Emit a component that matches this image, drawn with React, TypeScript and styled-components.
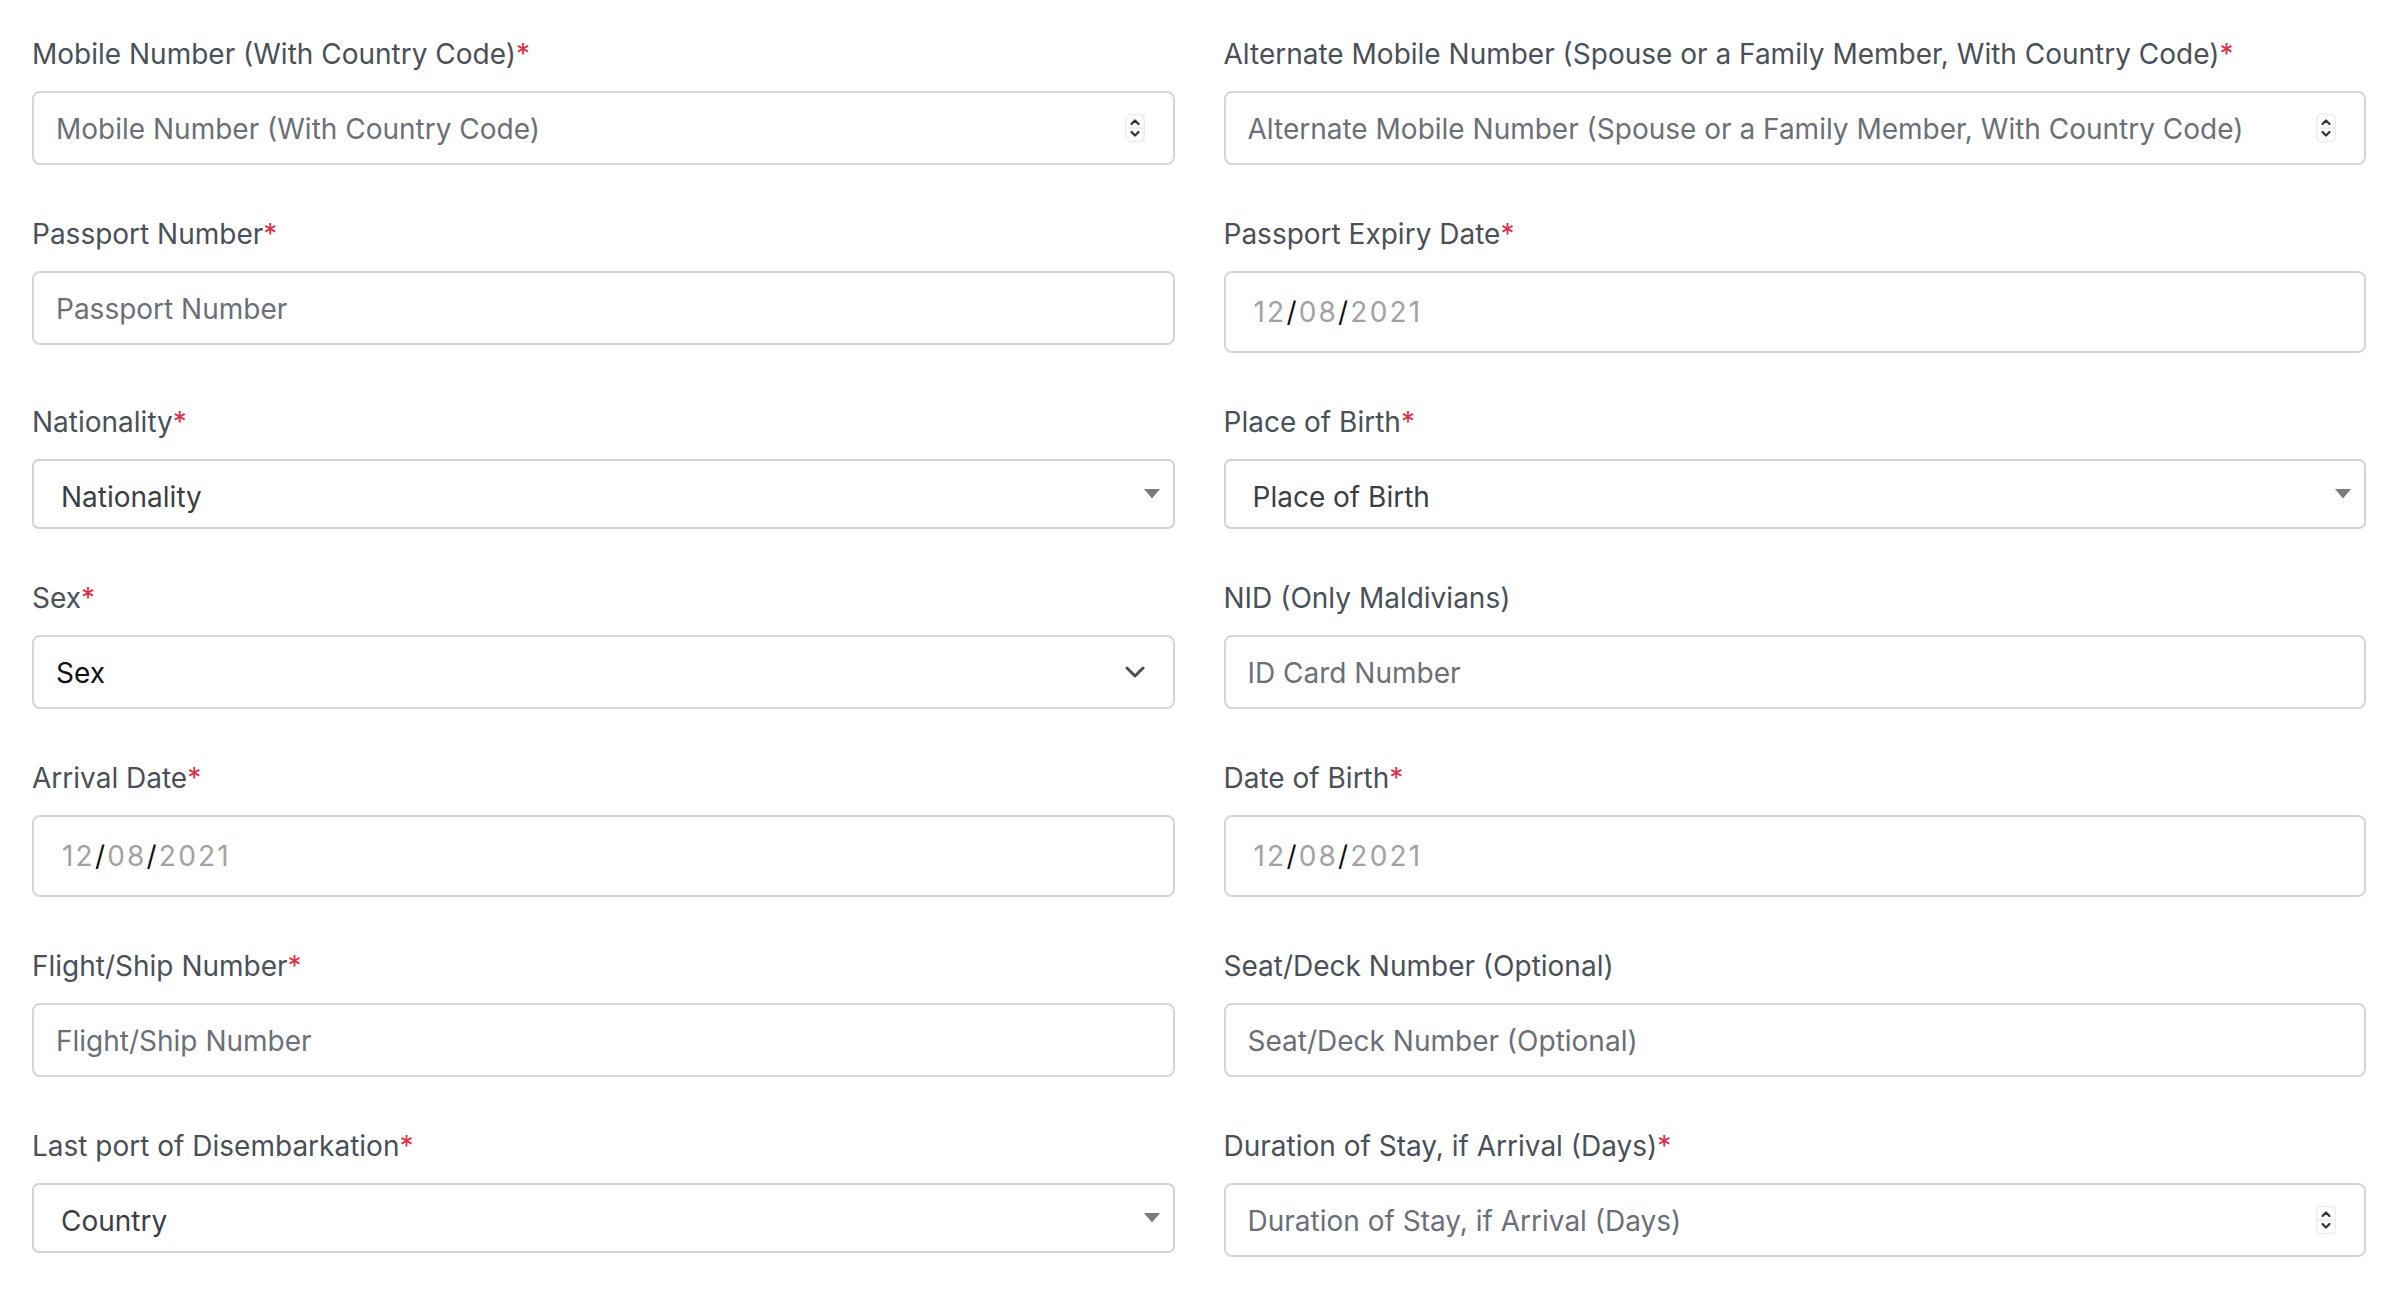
import React from "react";
import styled, { createGlobalStyle, css } from "styled-components";

const GlobalStyle = createGlobalStyle`
  html, body { margin: 0; padding: 0; background: #ffffff; }
  body { font-family: Inter, "Noto Sans", sans-serif; -webkit-font-smoothing: antialiased; }
  *, *::before, *::after { box-sizing: border-box; }
`;

const Form = styled.form`
  display: grid;
  grid-template-columns: 1fr 1fr;
  column-gap: 49px;
  row-gap: 48px;
  align-items: start;
  padding: 33px 26px 40px 32px;
`;

const Field = styled.div`
  display: flex;
  flex-direction: column;
  min-width: 0;
`;

const Label = styled.label`
  font-size: 28px;
  line-height: 42px;
  font-weight: 400;
  color: #4a5058;
  margin-bottom: 16px;
`;

const Req = styled.span`
  color: #dc2f4a;
`;

const controlBase = css`
  width: 100%;
  border: 2px solid #d6d6d6;
  border-radius: 8px;
  background: #ffffff;
  font-family: Inter, "Noto Sans", sans-serif;
  font-size: 28px;
`;

const ControlWrap = styled.div`
  position: relative;
  width: 100%;
`;

const TextInput = styled.input<{ $spinner?: boolean }>`
  ${controlBase};
  display: block;
  height: 74px;
  padding: 2px ${(p) => (p.$spinner ? "70px" : "22px")} 0 22px;
  color: #3f454c;
  outline: none;
  &::placeholder {
    color: #6b7078;
    opacity: 1;
  }
`;

const SpinnerIcon = styled.svg`
  position: absolute;
  right: 30px;
  top: 50%;
  transform: translateY(-50%);
  width: 20px;
  height: 29px;
  pointer-events: none;
`;

const DateBox = styled.div`
  ${controlBase};
  height: 82px;
  display: flex;
  align-items: center;
  padding: 0 28px;
  letter-spacing: 2.2px;
`;

const DatePart = styled.span`
  color: #a2a2a2;
`;

const DateSep = styled.span`
  color: #111111;
`;

const SelectBox = styled.div<{ $variant: "native" | "custom" }>`
  ${controlBase};
  display: flex;
  align-items: center;
  justify-content: space-between;
  ${(p) =>
    p.$variant === "native"
      ? css`
          height: 70px;
          border-radius: 7px;
          border-color: #d2d2d2;
          padding: 0 13px 0 27px;
          color: #3a3f45;
        `
      : css`
          height: 74px;
          padding: 0 28px 0 22px;
          color: #111111;
        `}
`;

const SelectText = styled.span<{ $shift?: boolean }>`
  line-height: 1;
  padding-top: ${(p) => (p.$shift ? "5px" : "2px")};
`;

const Spinner = () => (
  <SpinnerIcon viewBox="0 0 20 29" aria-hidden="true">
    <rect x="0.75" y="0.75" width="18.5" height="27.5" rx="5" fill="#ffffff" stroke="#ececec" strokeWidth="1.5" />
    <line x1="1" y1="14.5" x2="19" y2="14.5" stroke="#e2e2e2" strokeWidth="1" />
    <path d="M6.5 10.5 L10 7 L13.5 10.5" fill="none" stroke="#2f3338" strokeWidth="2.2" strokeLinecap="round" strokeLinejoin="round" />
    <path d="M6.5 18.5 L10 22 L13.5 18.5" fill="none" stroke="#2f3338" strokeWidth="2.2" strokeLinecap="round" strokeLinejoin="round" />
  </SpinnerIcon>
);

const Triangle = () => (
  <svg width="16" height="10" viewBox="0 0 16 10" aria-hidden="true">
    <path d="M0 0 H16 L8 9.5 Z" fill="#7a7a7a" />
  </svg>
);

const Chevron = () => (
  <svg width="20" height="12" viewBox="0 0 20 12" aria-hidden="true">
    <path d="M2 2 L10 10 L18 2" fill="none" stroke="#4b4f5a" strokeWidth="3" strokeLinecap="round" strokeLinejoin="round" />
  </svg>
);

type FieldDef =
  | { kind: "text"; label: string; required?: boolean; placeholder: string }
  | { kind: "number"; label: string; required?: boolean; placeholder: string }
  | { kind: "date"; label: string; required?: boolean }
  | { kind: "select"; label: string; required?: boolean; value: string }
  | { kind: "chevron"; label: string; required?: boolean; value: string };

const fields: FieldDef[] = [
  { kind: "number", label: "Mobile Number (With Country Code)", required: true, placeholder: "Mobile Number (With Country Code)" },
  {
    kind: "number",
    label: "Alternate Mobile Number (Spouse or a Family Member, With Country Code)",
    required: true,
    placeholder: "Alternate Mobile Number (Spouse or a Family Member, With Country Code)",
  },
  { kind: "text", label: "Passport Number", required: true, placeholder: "Passport Number" },
  { kind: "date", label: "Passport Expiry Date", required: true },
  { kind: "select", label: "Nationality", required: true, value: "Nationality" },
  { kind: "select", label: "Place of Birth", required: true, value: "Place of Birth" },
  { kind: "chevron", label: "Sex", required: true, value: "Sex" },
  { kind: "text", label: "NID (Only Maldivians)", placeholder: "ID Card Number" },
  { kind: "date", label: "Arrival Date", required: true },
  { kind: "date", label: "Date of Birth", required: true },
  { kind: "text", label: "Flight/Ship Number", required: true, placeholder: "Flight/Ship Number" },
  { kind: "text", label: "Seat/Deck Number (Optional)", placeholder: "Seat/Deck Number (Optional)" },
  { kind: "select", label: "Last port of Disembarkation", required: true, value: "Country" },
  { kind: "number", label: "Duration of Stay, if Arrival (Days)", required: true, placeholder: "Duration of Stay, if Arrival (Days)" },
];

const Control = ({ f }: { f: FieldDef }) => {
  switch (f.kind) {
    case "text":
      return <TextInput type="text" placeholder={f.placeholder} />;
    case "number":
      return (
        <ControlWrap>
          <TextInput type="text" inputMode="numeric" placeholder={f.placeholder} $spinner />
          <Spinner />
        </ControlWrap>
      );
    case "date":
      return (
        <DateBox>
          <DatePart>12</DatePart>
          <DateSep>/</DateSep>
          <DatePart>08</DatePart>
          <DateSep>/</DateSep>
          <DatePart>2021</DatePart>
        </DateBox>
      );
    case "select":
      return (
        <SelectBox $variant="native" role="combobox">
          <SelectText $shift>{f.value}</SelectText>
          <Triangle />
        </SelectBox>
      );
    case "chevron":
      return (
        <SelectBox $variant="custom" role="combobox">
          <SelectText>{f.value}</SelectText>
          <Chevron />
        </SelectBox>
      );
  }
};

export default function App() {
  return (
    <>
      <GlobalStyle />
      <Form onSubmit={(e) => e.preventDefault()}>
        {fields.map((f) => (
          <Field key={f.label}>
            <Label>
              {f.label}
              {f.required && <Req>*</Req>}
            </Label>
            <Control f={f} />
          </Field>
        ))}
      </Form>
    </>
  );
}
